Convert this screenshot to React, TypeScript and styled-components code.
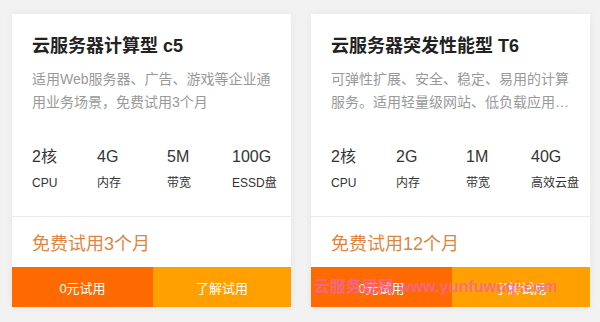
import React from "react";
import styled, { createGlobalStyle } from "styled-components";

const GlobalStyle = createGlobalStyle`
  html, body {
    margin: 0;
    padding: 0;
    background: #f2f2f2;
  }
  body {
    font-family: "Liberation Sans", Arial, "Noto Sans CJK SC", sans-serif;
  }
`;

type Spec = { value: string; label: string };

type Product = {
  title: string;
  desc: string;
  specs: Spec[];
  trial: string;
};

const products: Product[] = [
  {
    title: "云服务器计算型 c5",
    desc: "适用Web服务器、广告、游戏等企业通用业务场景，免费试用3个月",
    specs: [
      { value: "2核", label: "CPU" },
      { value: "4G", label: "内存" },
      { value: "5M", label: "带宽" },
      { value: "100G", label: "ESSD盘" },
    ],
    trial: "免费试用3个月",
  },
  {
    title: "云服务器突发性能型 T6",
    desc: "可弹性扩展、安全、稳定、易用的计算服务。适用轻量级网站、低负载应用、开发测试环境等场景",
    specs: [
      { value: "2核", label: "CPU" },
      { value: "2G", label: "内存" },
      { value: "1M", label: "带宽" },
      { value: "40G", label: "高效云盘" },
    ],
    trial: "免费试用12个月",
  },
];

const Page = styled.main`
  position: relative;
  display: grid;
  grid-template-columns: 279px 279px;
  gap: 20px;
  padding: 14px 10px 16px 12px;
  width: 600px;
  height: 322px;
  box-sizing: border-box;
`;

const Card = styled.section`
  display: flex;
  flex-direction: column;
  background: #fff;
  box-shadow: 0 0 8px rgba(0, 0, 0, 0.06);
`;

const Body = styled.div`
  padding: 20px 20px 0 20px;
  height: 202px;
  box-sizing: border-box;
`;

const Title = styled.h3`
  margin: 0;
  font-size: 18px;
  line-height: 24px;
  font-weight: 700;
  color: #222;
`;

const Desc = styled.p`
  margin: 10px 0 0;
  font-size: 14px;
  line-height: 23px;
  color: #999;
  height: 46px;
  overflow: hidden;
  display: -webkit-box;
  -webkit-line-clamp: 2;
  -webkit-box-orient: vertical;
`;

const Specs = styled.div`
  display: grid;
  grid-template-columns: 65px 70px 65px auto;
  margin-top: 33px;
`;

const SpecItem = styled.div`
  display: flex;
  flex-direction: column;
  white-space: nowrap;
`;

const SpecValue = styled.span`
  font-size: 16px;
  line-height: 20px;
  color: #333;
`;

const SpecLabel = styled.span`
  margin-top: 8px;
  font-size: 12px;
  line-height: 16px;
  color: #333;
`;

const Trial = styled.div`
  border-top: 1px solid #ececec;
  padding: 0 20px;
  height: 50px;
  display: flex;
  align-items: center;
  font-size: 18px;
  color: #e0853f;
`;

const Actions = styled.div`
  display: grid;
  grid-template-columns: 141px 1fr;
  height: 40px;
`;

const Action = styled.button<{ $primary?: boolean }>`
  border: 0;
  margin: 0;
  padding: 0;
  font-family: inherit;
  font-size: 13px;
  color: #fff;
  background: ${(p) => (p.$primary ? "#ff6a00" : "#ffa000")};
  cursor: pointer;
`;

const Watermark = styled.div`
  position: absolute;
  left: 314px;
  top: 277px;
  font-size: 16px;
  line-height: 20px;
  font-weight: 700;
  color: rgba(240, 100, 170, 0.8);
  white-space: nowrap;
  pointer-events: none;
`;

export default function App() {
  return (
    <>
      <GlobalStyle />
      <Page>
        {products.map((p) => (
          <Card key={p.title}>
            <Body>
              <Title>{p.title}</Title>
              <Desc>{p.desc}</Desc>
              <Specs>
                {p.specs.map((s) => (
                  <SpecItem key={s.label}>
                    <SpecValue>{s.value}</SpecValue>
                    <SpecLabel>{s.label}</SpecLabel>
                  </SpecItem>
                ))}
              </Specs>
            </Body>
            <Trial>{p.trial}</Trial>
            <Actions>
              <Action $primary>0元试用</Action>
              <Action>了解试用</Action>
            </Actions>
          </Card>
        ))}
        <Watermark>云服务器网 www.yunfuwuqi.com</Watermark>
      </Page>
    </>
  );
}
